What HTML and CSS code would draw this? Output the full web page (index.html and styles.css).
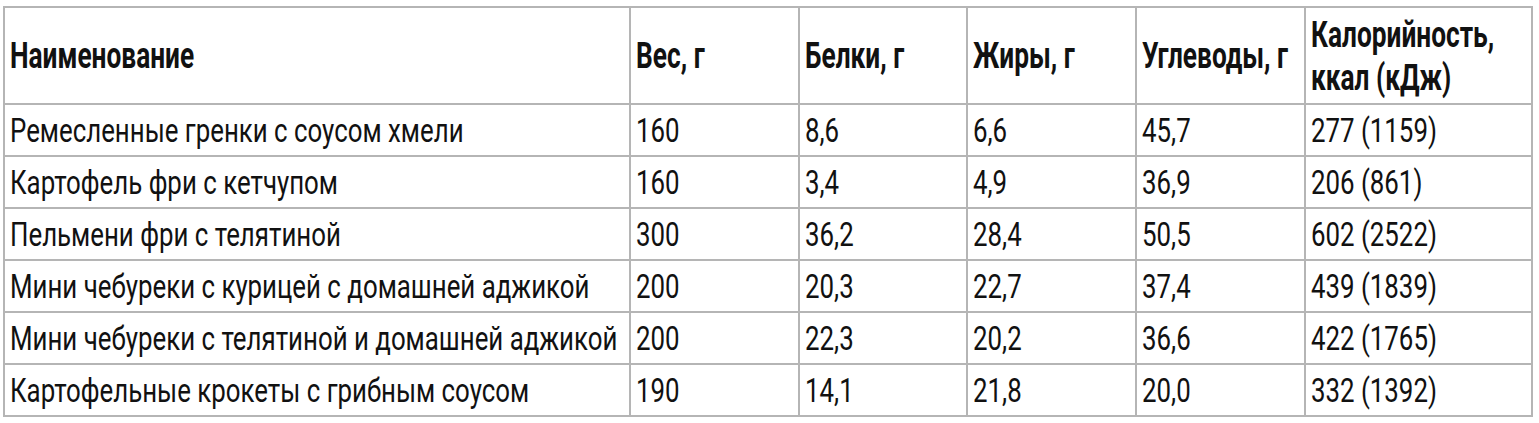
FILE: index.html
```html
<!DOCTYPE html>
<html lang="ru">
<head>
<meta charset="utf-8">
<title>КБЖУ</title>
<link rel="stylesheet" href="styles.css">
</head>
<body>
<div class="wrap">
<table class="nutri">
<colgroup>
<col class="c-name"><col class="c-num"><col class="c-num2"><col class="c-num"><col class="c-num"><col class="c-cal">
</colgroup>
<thead>
<tr class="head">
<th><span class="t">Наименование</span></th>
<th><span class="t">Вес, г</span></th>
<th><span class="t">Белки, г</span></th>
<th><span class="t">Жиры, г</span></th>
<th><span class="t">Углеводы, г</span></th>
<th><span class="t">Калорийность,<br>ккал (кДж)</span></th>
</tr>
</thead>
<tbody>
<tr><td><span class="t">Ремесленные гренки с соусом хмели</span></td><td><span class="t">160</span></td><td><span class="t">8,6</span></td><td><span class="t">6,6</span></td><td><span class="t">45,7</span></td><td><span class="t">277 (1159)</span></td></tr>
<tr><td><span class="t">Картофель фри с кетчупом</span></td><td><span class="t">160</span></td><td><span class="t">3,4</span></td><td><span class="t">4,9</span></td><td><span class="t">36,9</span></td><td><span class="t">206 (861)</span></td></tr>
<tr><td><span class="t">Пельмени фри с телятиной</span></td><td><span class="t">300</span></td><td><span class="t">36,2</span></td><td><span class="t">28,4</span></td><td><span class="t">50,5</span></td><td><span class="t">602 (2522)</span></td></tr>
<tr><td><span class="t">Мини чебуреки с курицей с домашней аджикой</span></td><td><span class="t">200</span></td><td><span class="t">20,3</span></td><td><span class="t">22,7</span></td><td><span class="t">37,4</span></td><td><span class="t">439 (1839)</span></td></tr>
<tr><td><span class="t">Мини чебуреки с телятиной и домашней аджикой</span></td><td><span class="t">200</span></td><td><span class="t">22,3</span></td><td><span class="t">20,2</span></td><td><span class="t">36,6</span></td><td><span class="t">422 (1765)</span></td></tr>
<tr><td><span class="t">Картофельные крокеты с грибным соусом</span></td><td><span class="t">190</span></td><td><span class="t">14,1</span></td><td><span class="t">21,8</span></td><td><span class="t">20,0</span></td><td><span class="t">332 (1392)</span></td></tr>
</tbody>
</table>
</div>
</body>
</html>
```
FILE: styles.css
```css
html, body {
  margin: 0;
  padding: 0;
  background: #ffffff;
}
.wrap {
  padding: 6px 0 0 3px;
}
.nutri {
  border-collapse: collapse;
  table-layout: fixed;
  width: 1530px;
  font-family: Roboto, "Noto Sans", sans-serif;
  color: #111111;
}
.c-name { width: 626px; }
.c-num { width: 169px; }
.c-num2 { width: 168px; }
.c-cal { width: 227px; }
.nutri th,
.nutri td {
  border: 2px solid #b5b5b5;
  padding: 0 5px;
  text-align: left;
  vertical-align: middle;
  white-space: nowrap;
}
.t {
  display: inline-block;
  transform-origin: left center;
}
.nutri th {
  font-weight: 700;
  font-size: 37px;
  line-height: 43px;
}
.nutri th .t {
  transform: scaleX(0.71);
}
.nutri td {
  font-weight: 400;
  font-size: 34px;
  line-height: 38px;
}
.nutri td .t {
  transform: scaleX(0.76);
}
.head { height: 97px; }
.nutri tbody tr { height: 52px; }
```
